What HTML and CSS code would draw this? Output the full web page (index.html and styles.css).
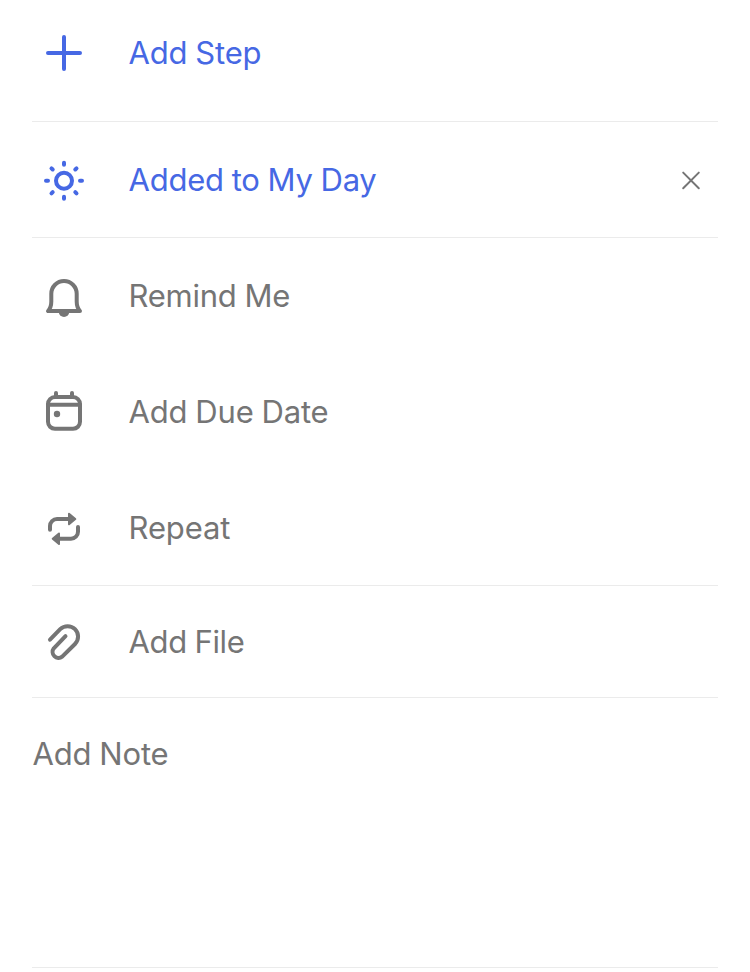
FILE: index.html
```html
<!DOCTYPE html>
<html lang="en">
<head>
<meta charset="utf-8">
<title>Task details</title>
<link rel="stylesheet" href="styles.css">
</head>
<body>
<main class="details">
  <section class="group step">
    <div class="row accent">
      <svg class="icon" viewBox="0 0 48 48"><path d="M24 8v32M8 24h32"/></svg>
      <span class="label add-step">Add Step</span>
    </div>
  </section>
  <section class="group day">
    <div class="row accent">
      <svg class="icon" viewBox="0 0 48 48"><g transform="translate(0 .8)"><circle cx="24" cy="24" r="8"/><path d="M24 6v2M24 40v2M6 24h2M40 24h2M11.500 11.500l1.200 1.200M35.300 35.300l1.200 1.200M11.500 36.500l1.200-1.200M35.300 12.700l1.200-1.200"/></g></svg>
      <span class="label my-day">Added to My Day</span>
      <svg class="close" viewBox="0 0 24 24"><path d="M4.200 4.600l15.600 15.600M19.800 4.600L4.200 20.200"/></svg>
    </div>
  </section>
  <section class="group dates">
    <div class="row">
      <svg class="icon" viewBox="0 0 48 48"><path d="M8 39h32q-3.300-3.500-3.300-9.500V21.700a12.700 12.700 0 0 0-25.400 0v7.800q0 6-3.300 9.500z"/><path class="fill" d="M18.800 40h10.400a5.200 5 0 0 1-10.400 0z"/></svg>
      <span class="label remind">Remind Me</span>
    </div>
    <div class="row">
      <svg class="icon" viewBox="0 0 48 48"><rect x="8" y="9" width="32" height="31.800" rx="7"/><path d="M16 5v4M32 5v4M8 16.800h32"/><circle class="fill" cx="17" cy="26" r="3.200"/></svg>
      <span class="label due">Add Due Date</span>
    </div>
    <div class="row">
      <svg class="icon" viewBox="0 0 48 48"><path d="M10 25.700V22a7 7 0 0 1 7-7h13M38 23v4.700a7 7 0 0 1-7 7H18"/><path class="head" d="M29 9.700l6.300 5.300-6.300 5.300zM19 29.400l-6.300 5.300 6.300 5.300z"/></svg>
      <span class="label repeat">Repeat</span>
    </div>
  </section>
  <section class="group file">
    <div class="row">
      <svg class="icon" viewBox="0 0 48 48"><path d="M10 21.700L20.200 11.200A10.400 10.400 0 0 1 35 26L22.200 38.700A6 6 0 0 1 13.800 30.300L25.500 18.200"/></svg>
      <span class="label add-file">Add File</span>
    </div>
  </section>
  <section class="group note">
    <span class="label add-note">Add Note</span>
  </section>
</main>
</body>
</html>
```
FILE: styles.css
```css
* { box-sizing: border-box; }
body { margin: 0; background: #fff; font-family: Inter, sans-serif; font-size: 31px; color: #757575; }
.details { padding: 0 32px; }
.group { border-bottom: 1px solid #ebebeb; display: flex; flex-direction: column; }
.row { display: flex; align-items: center; height: 116px; padding: 0 15px 0 8px; }
.accent { color: #4668e4; }
.icon { width: 48px; height: 48px; margin-right: 40px; flex: none; }
svg { fill: none; stroke: currentColor; stroke-width: 4; stroke-linecap: round; stroke-linejoin: round; }
.fill { fill: currentColor; stroke: none; }
.head { fill: currentColor; stroke-width: 2; }
.label { white-space: nowrap; line-height: 40px; padding-left: 0.6px; letter-spacing: -0.2px; word-spacing: -0.5px; }
.my-day { letter-spacing: -0.26px; }
.remind { letter-spacing: -0.27px; }
.repeat { letter-spacing: -0.15px; }
.add-file { letter-spacing: -0.4px; }
.close { width: 24px; height: 24px; margin-left: auto; color: #757575; stroke-width: 2; }
.step .row { height: 106px; }
.step { height: 122px; }
.day { height: 116px; }
.dates { height: 348px; }
.dates .row { flex: none; }
.file { height: 112px; }
.note { height: 270px; padding-top: 36px; }
```
